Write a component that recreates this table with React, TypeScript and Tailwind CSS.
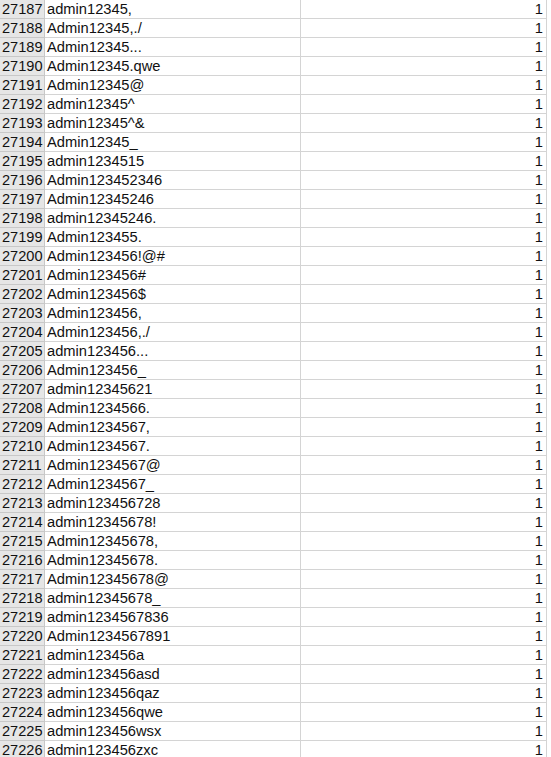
import React from "react";

const rows: string[] = [
  "admin12345,",
  "Admin12345,./",
  "Admin12345...",
  "Admin12345.qwe",
  "Admin12345@",
  "admin12345^",
  "admin12345^&",
  "Admin12345_",
  "admin1234515",
  "Admin123452346",
  "Admin12345246",
  "admin12345246.",
  "Admin123455.",
  "Admin123456!@#",
  "Admin123456#",
  "Admin123456$",
  "Admin123456,",
  "Admin123456,./",
  "admin123456...",
  "Admin123456_",
  "admin12345621",
  "Admin1234566.",
  "Admin1234567,",
  "Admin1234567.",
  "Admin1234567@",
  "Admin1234567_",
  "admin123456728",
  "admin12345678!",
  "Admin12345678,",
  "Admin12345678.",
  "Admin12345678@",
  "admin12345678_",
  "admin1234567836",
  "Admin1234567891",
  "admin123456a",
  "admin123456asd",
  "admin123456qaz",
  "admin123456qwe",
  "admin123456wsx",
  "admin123456zxc",
];

export default function App() {
  return (
    <div
      className="w-[551px] h-[757px] overflow-hidden bg-white text-[#111]"
      style={{ fontFamily: '"Liberation Sans", Arial, sans-serif' }}
    >
      {rows.map((t, i) => (
        <div key={i} className="flex h-[19px]">
          <div className="w-[45px] shrink-0 h-[19px] bg-[#e6e6e6] border-r border-b border-[#c8c8c8] text-[14.6px] leading-[18px] pl-[2px] text-[#111] whitespace-nowrap overflow-hidden">
            {27187 + i}
          </div>
          <div className="w-[256px] shrink-0 h-[19px] border-r border-b border-[#d4d4d4] text-[14.7px] leading-[18px] pl-[2px] whitespace-nowrap overflow-hidden">
            {t}
          </div>
          <div className="w-[246px] shrink-0 h-[19px] border-r border-b border-[#d4d4d4] text-[14.7px] leading-[18px] text-right pr-[3px]">
            1
          </div>
        </div>
      ))}
    </div>
  );
}
